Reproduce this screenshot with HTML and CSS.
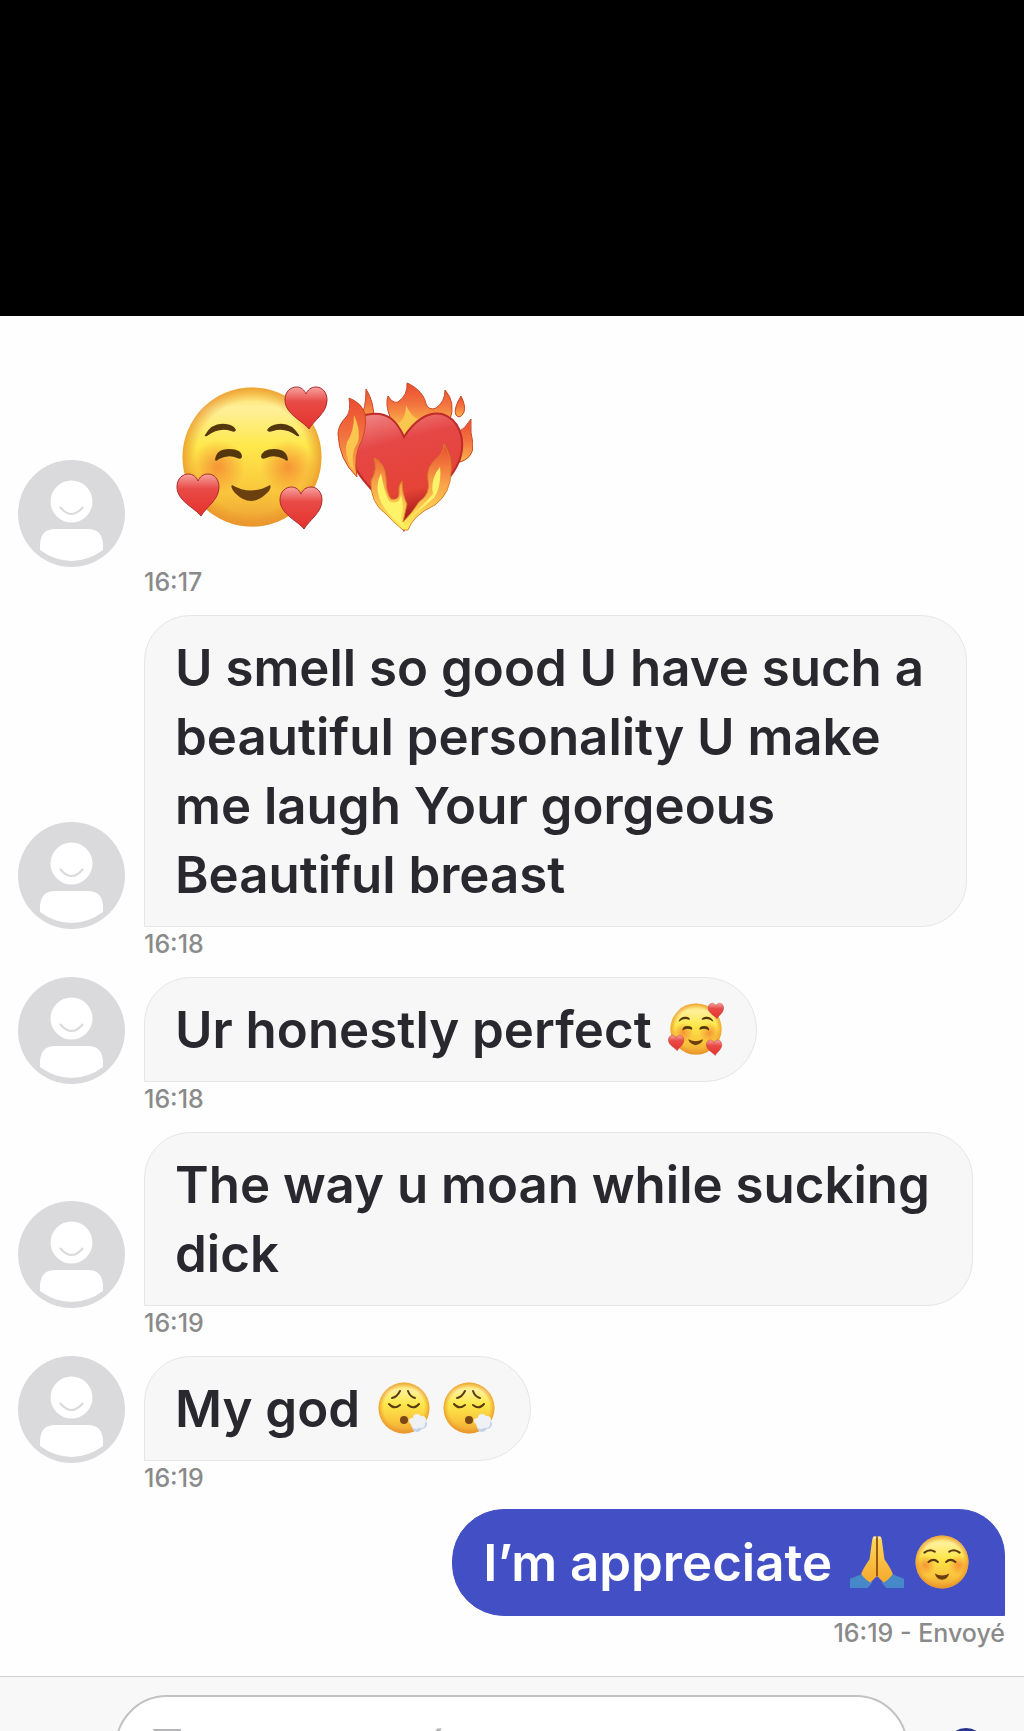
FILE: index.html
```html
<!DOCTYPE html>
<html lang="fr">
<head>
  <meta charset="utf-8">
  <meta name="viewport" content="width=device-width, initial-scale=1">
  <title>Messages</title>
  <link rel="stylesheet" href="styles.css">
</head>
<body>
  <!-- shared drawings -->
  <svg class="defs" aria-hidden="true">
    <defs>
      <linearGradient id="skin" x1="0" y1="0" x2="0" y2="1">
        <stop offset="0" stop-color="#fdda52"/>
        <stop offset="0.15" stop-color="#fff09a"/>
        <stop offset="0.42" stop-color="#fee84b"/>
        <stop offset="0.75" stop-color="#fac63c"/>
        <stop offset="1" stop-color="#eea033"/>
      </linearGradient>
      <radialGradient id="rim">
        <stop offset="0.8" stop-color="#e8912a" stop-opacity="0"/>
        <stop offset="1" stop-color="#e8912a" stop-opacity="0.75"/>
      </radialGradient>
      <radialGradient id="blush">
        <stop offset="0" stop-color="#f2702c" stop-opacity="0.65"/>
        <stop offset="1" stop-color="#f2702c" stop-opacity="0"/>
      </radialGradient>
      <linearGradient id="red" x1="0" y1="0" x2="0" y2="1">
        <stop offset="0" stop-color="#f7a3a0"/>
        <stop offset="0.35" stop-color="#e94b47"/>
        <stop offset="1" stop-color="#e5312d"/>
      </linearGradient>
      <linearGradient id="bigred" x1="0.2" y1="0" x2="0.45" y2="1">
        <stop offset="0" stop-color="#ef8483"/>
        <stop offset="0.28" stop-color="#e54746"/>
        <stop offset="0.7" stop-color="#e64336"/>
        <stop offset="1" stop-color="#8f0f10"/>
      </linearGradient>
      <linearGradient id="flame" x1="0" y1="0" x2="0" y2="1">
        <stop offset="0" stop-color="#ea4b31"/>
        <stop offset="0.5" stop-color="#f3743f"/>
        <stop offset="1" stop-color="#fbb64b"/>
      </linearGradient>
      <linearGradient id="lowflame" x1="0" y1="0" x2="0" y2="1">
        <stop offset="0" stop-color="#e9492e"/>
        <stop offset="0.45" stop-color="#f9a048"/>
        <stop offset="1" stop-color="#fdf25a"/>
      </linearGradient>
      <linearGradient id="hand" x1="0" y1="0" x2="0" y2="1">
        <stop offset="0" stop-color="#ffd95c"/>
        <stop offset="1" stop-color="#f6a92c"/>
      </linearGradient>
      <path id="heart" d="M24 42 C18 34 0 27 0 13 C0 4 6 0 11.500 0 C16 0 19.500 3 21 7 C22.500 3 26 0 31 0 C37 0 42 5 42 13 C42 26 29 33 24 42Z"/>
    </defs>

    <symbol id="avatar" viewBox="0 0 107 107">
      <circle cx="53.500" cy="53.500" r="53.500" fill="#dadadc"/>
      <circle cx="53.500" cy="41.500" r="21" fill="#fff"/>
      <path d="M42 47 Q53.500 61 65 47" fill="none" stroke="#dadadc" stroke-width="2"/>
      <path d="M22 90 V84 Q23 69 37 69 H70 Q84 69 85 84 V90 Q70 101 53.500 101 Q37 101 22 90Z" fill="#fff"/>
    </symbol>

    <symbol id="hearts-face" viewBox="0 -2 152 146">
      <circle cx="76" cy="71" r="69.500" fill="url(#skin)"/>
      <circle cx="76" cy="71" r="69.500" fill="url(#rim)"/>
      <circle cx="42" cy="81" r="27" fill="url(#blush)"/>
      <circle cx="112" cy="81" r="27" fill="url(#blush)"/>
      <g fill="#54370d">
        <path d="M29 49 Q36 36 50 38 Q58 39 60 44 Q59 47 55 45 Q43 41 31 50 Q28 51 29 49Z"/>
        <path d="M123 49 Q115 36 102 38 Q94 39 91 44 Q92 47 97 45 Q109 41 121 50 Q124 51 123 49Z"/>
        <path d="M39 74 Q40 63 53 63 Q66 63 66 71 Q65 74 61 72 Q53 68 43 73 Q40 76 39 74Z"/>
        <path d="M112 74 Q111 63 98 63 Q86 63 85 71 Q86 74 90 72 Q98 68 108 73 Q111 76 112 74Z"/>
      </g>
      <path d="M56 99 Q75 110 94 99 Q96 102 91 107 Q75 123 59 107 Q54 101 56 99Z" fill="#6b400e"/>
      <g fill="url(#red)" stroke="#a92b2b" stroke-width="1">
        <use href="#heart" x="109" y="1"/>
        <use href="#heart" x="1" y="88"/>
        <use href="#heart" x="104" y="101"/>
      </g>
    </symbol>

    <symbol id="fire-heart" viewBox="0 0 136 150">
      <g stroke="#c94a26" stroke-width="1">
        <path d="M23 36 Q29 28 29 7 Q37 19 37 38 L62 44 L89 40 L113 38 Q119 20 108 8 Q108 20 99 26 Q92 29 89 22 C87 10 75 3 70 1 Q71 13 61 20 Q56 22 51 14 Q48 22 53 35 Z" fill="url(#flame)"/>
        <path d="M124 14 Q129 24 127 30 Q123 38 119 33 Q116 27 124 14Z" fill="url(#flame)"/>
        <path d="M134 37 Q128 47 120 51 V81 Q137 77 136 62 Q133 51 134 37Z" fill="url(#flame)"/>
      </g>
      <path d="M58 43 Q69 39 69 23 Q73 34 84 39 L68 58Z" fill="#fbc64e"/>
      <path d="M67 55 C77 39 91 29 105 32 C122 37 128 56 124 73 C117 102 85 116 67 148 C53 119 20 103 12 70 C7 49 17 33 34 32 C51 30 60 39 67 55Z" fill="url(#bigred)" stroke="#bd2a28" stroke-width="2"/>
      <path d="M12 16 Q25 21 28 32 Q30 44 25 58 Q16 74 20 95 Q2 78 1 52 Q1 43 10 34 Q14 28 12 16Z" fill="url(#flame)" stroke="#c94a26"/>
      <path d="M13 84 Q7 69 10 60 Q17 50 17 33 Q24 48 21 60 Q13 71 17 88Z" fill="#fbc64e"/>
      <path d="M66 148 Q55 139 49 132 Q33 121 34 99 Q41 87 37 76 Q48 81 49 96 Q49 111 54 117 Q63 119 62 109 Q61 104 65 99 Q65 112 70 122 L66 140 Q75 131 82 120 Q94 112 91 98 Q89 86 99 77 Q107 71 107 62 Q115 75 114 89 Q114 111 98 123 Q76 133 71 148Z" fill="url(#lowflame)" stroke="#d6812b" stroke-width="1"/>
      <path d="M65 144 Q46 129 42 115 Q38 103 44 91 Q47 109 52 119 Q62 124 64 113 Q67 121 65 132 Q62 138 68 145Z M73 136 Q88 121 96 112 Q93 97 103 85 Q105 104 97 116Z" fill="#fdf268"/>
    </symbol>

    <symbol id="exhale-face" viewBox="0 0 54 54">
      <circle cx="26" cy="27" r="25.500" fill="url(#skin)"/>
      <circle cx="26" cy="27" r="25.500" fill="url(#rim)"/>
      <g fill="none" stroke="#5a3a10" stroke-linecap="round" stroke-width="2">
        <path d="M14 17 Q19 16 22 10"/>
        <path d="M30 10 Q32 16 37 17"/>
        <path d="M11 23 Q16 29 22 24"/>
        <path d="M30 24 Q36 29 41 23"/>
      </g>
      <circle cx="26" cy="39" r="4" fill="#7b4712"/>
      <g fill="#c3d3ea">
        <circle cx="39" cy="46" r="5"/>
        <circle cx="44" cy="43" r="5"/>
      </g>
      <g fill="#f0f1f4">
        <circle cx="34" cy="40" r="3"/>
        <circle cx="39" cy="37" r="4"/>
        <circle cx="44" cy="39" r="4"/>
        <circle cx="43" cy="43" r="4"/>
        <circle cx="38" cy="43" r="5"/>
      </g>
    </symbol>

    <symbol id="pray" viewBox="0 0 58 58">
      <path d="M0 57 V47 L13 42 L24 51 L19 57Z" fill="#4688c8"/>
      <path d="M58 57 V47 L45 42 L34 51 L39 57Z" fill="#4688c8"/>
      <path d="M29 2 Q25 0 24 4 L21 26 Q14 36 12 42 Q17 49 22 51 L29 44 L36 51 Q41 49 46 42 Q44 36 37 26 L34 4 Q33 0 29 2Z" fill="url(#hand)"/>
      <path d="M29 2 V44" stroke="#92500f" stroke-width="2"/>
      <path d="M25 3 H28 M30 3 H33" stroke="#fbe3c8" stroke-width="2"/>
    </symbol>

    <symbol id="smile-face" viewBox="0 0 52 52">
      <circle cx="26" cy="26" r="25.500" fill="url(#skin)"/>
      <circle cx="26" cy="26" r="25.500" fill="url(#rim)"/>
      <circle cx="10" cy="29" r="10" fill="url(#blush)"/>
      <circle cx="42" cy="29" r="10" fill="url(#blush)"/>
      <g fill="none" stroke="#5a3a10" stroke-linecap="round" stroke-width="2">
        <path d="M9 17 Q14 13 19 16"/>
        <path d="M33 16 Q38 13 43 17"/>
        <path d="M13 26 Q18 22 22 26"/>
        <path d="M30 26 Q34 22 39 26"/>
      </g>
      <path d="M19 37 Q26 41 33 37 Q31 43 26 43 Q21 43 19 37Z" fill="#6b400e"/>
    </symbol>
  </svg>

  <div class="top"></div>

  <main class="chat">
    <div class="message">
      <svg class="avatar"><use href="#avatar"/></svg>
      <div class="stickers">
        <svg class="sticker" role="img" aria-label="Smiling face with hearts"><use href="#hearts-face"/></svg>
        <svg class="sticker fire" role="img" aria-label="Heart on fire"><use href="#fire-heart"/></svg>
      </div>
      <time class="meta">16:17</time>
    </div>

    <div class="message">
      <svg class="avatar"><use href="#avatar"/></svg>
      <p class="bubble long">U smell so good U have such a<br>beautiful personality U make<br>me laugh Your gorgeous<br>Beautiful breast</p>
      <time class="meta">16:18</time>
    </div>

    <div class="message">
      <svg class="avatar"><use href="#avatar"/></svg>
      <p class="bubble">Ur honestly perfect <svg class="emoji" role="img" aria-label="Smiling face with hearts"><use href="#hearts-face"/></svg></p>
      <time class="meta">16:18</time>
    </div>

    <div class="message">
      <svg class="avatar"><use href="#avatar"/></svg>
      <p class="bubble long">The way u moan while sucking<br>dick</p>
      <time class="meta">16:19</time>
    </div>

    <div class="message">
      <svg class="avatar"><use href="#avatar"/></svg>
      <p class="bubble">My god <svg class="emoji" role="img" aria-label="Face exhaling"><use href="#exhale-face"/></svg><svg class="emoji" role="img" aria-label="Face exhaling"><use href="#exhale-face"/></svg></p>
      <time class="meta">16:19</time>
    </div>

    <div class="message sent">
      <p class="bubble">I’m appreciate <svg class="emoji" role="img" aria-label="Folded hands"><use href="#pray"/></svg><svg class="emoji" role="img" aria-label="Smiling face"><use href="#smile-face"/></svg></p>
      <span class="meta">16:19 - Envoyé</span>
    </div>
  </main>

  <form class="composer">
    <input class="field" type="text" placeholder="Taper une réponse" aria-label="Message">
    <button class="emoji-button" type="button" aria-label="Emoji">
      <svg viewBox="0 0 40 40"><circle cx="20" cy="20" r="18" fill="none" stroke="#28328f" stroke-width="4"/></svg>
    </button>
  </form>
</body>
</html>
```
FILE: styles.css
```css
* {
  box-sizing: border-box;
}

body {
  margin: 0;
  height: 100vh;
  overflow: hidden;
  display: flex;
  flex-direction: column;
  background-color: #fefefe;
  color: #29282f;
  font-family: Inter, "Liberation Sans", sans-serif;
}

.defs {
  position: absolute;
  width: 0;
  height: 0;
}

.top {
  flex: none;
  height: 316px;
  background-color: #000;
}

.chat {
  flex: none;
  padding: 60px 19px 10px 18px;
}

.message {
  display: grid;
  grid-template-columns: 107px 1fr;
  column-gap: 19px;
  justify-items: start;
  align-items: end;
}

.avatar {
  width: 107px;
  height: 107px;
  margin: 0 0 -2px;
}

.bubble {
  margin: 0;
  padding: 17px 32px 17px 30px;
  border: 1px solid #e6e6e7;
  border-radius: 46px 52px 52px 0;
  background-color: #f7f7f7;
  font-size: 51px;
  font-weight: 600;
  line-height: 69px;
  white-space: nowrap;
}

.bubble.long {
  padding-right: 42px;
  border-radius: 46px 46px 46px 0;
}

.meta {
  grid-column: 2;
  height: 50px;
  padding-top: 3px;
  color: #8a8a8a;
  font-size: 25px;
  font-weight: 500;
  line-height: 28px;
}

.stickers {
  display: flex;
  gap: 9px;
  height: 189px;
  padding: 6px 32px 0;
}

.sticker {
  width: 152px;
  height: 150px;
}

.sticker.fire {
  width: 136px;
}

.emoji {
  width: 56px;
  height: 54px;
  margin-left: 4px;
  vertical-align: -8px;
}

.emoji + .emoji {
  margin-left: 9px;
}

.sent {
  grid-template-columns: 1fr;
  justify-items: end;
  margin-top: -2px;
}

.sent .bubble {
  padding: 18px 34px 18px 30px;
  border-color: #4350c5;
  border-radius: 52px 46px 0 52px;
  background-color: #4350c5;
  color: #fff;
}

.sent .meta {
  grid-column: 1;
}

.composer {
  flex: 1;
  min-height: 0;
  overflow: hidden;
  display: flex;
  align-items: flex-start;
  gap: 38px;
  padding: 18px 38px 0 115px;
  border-top: 1px solid #cfcfd0;
  background-color: #f8f8f8;
}

.field {
  flex: 1;
  min-width: 0;
  height: 106px;
  padding: 0 34px;
  border: 2px solid #c2c2c3;
  border-radius: 52px;
  background-color: #fff;
  font: 400 50px Inter, "Liberation Sans", sans-serif;
}

.field::placeholder {
  color: #b5b5b7;
}

.emoji-button {
  width: 40px;
  height: 40px;
  margin-top: 33px;
  padding: 0;
  border: none;
  background: none;
}
```
